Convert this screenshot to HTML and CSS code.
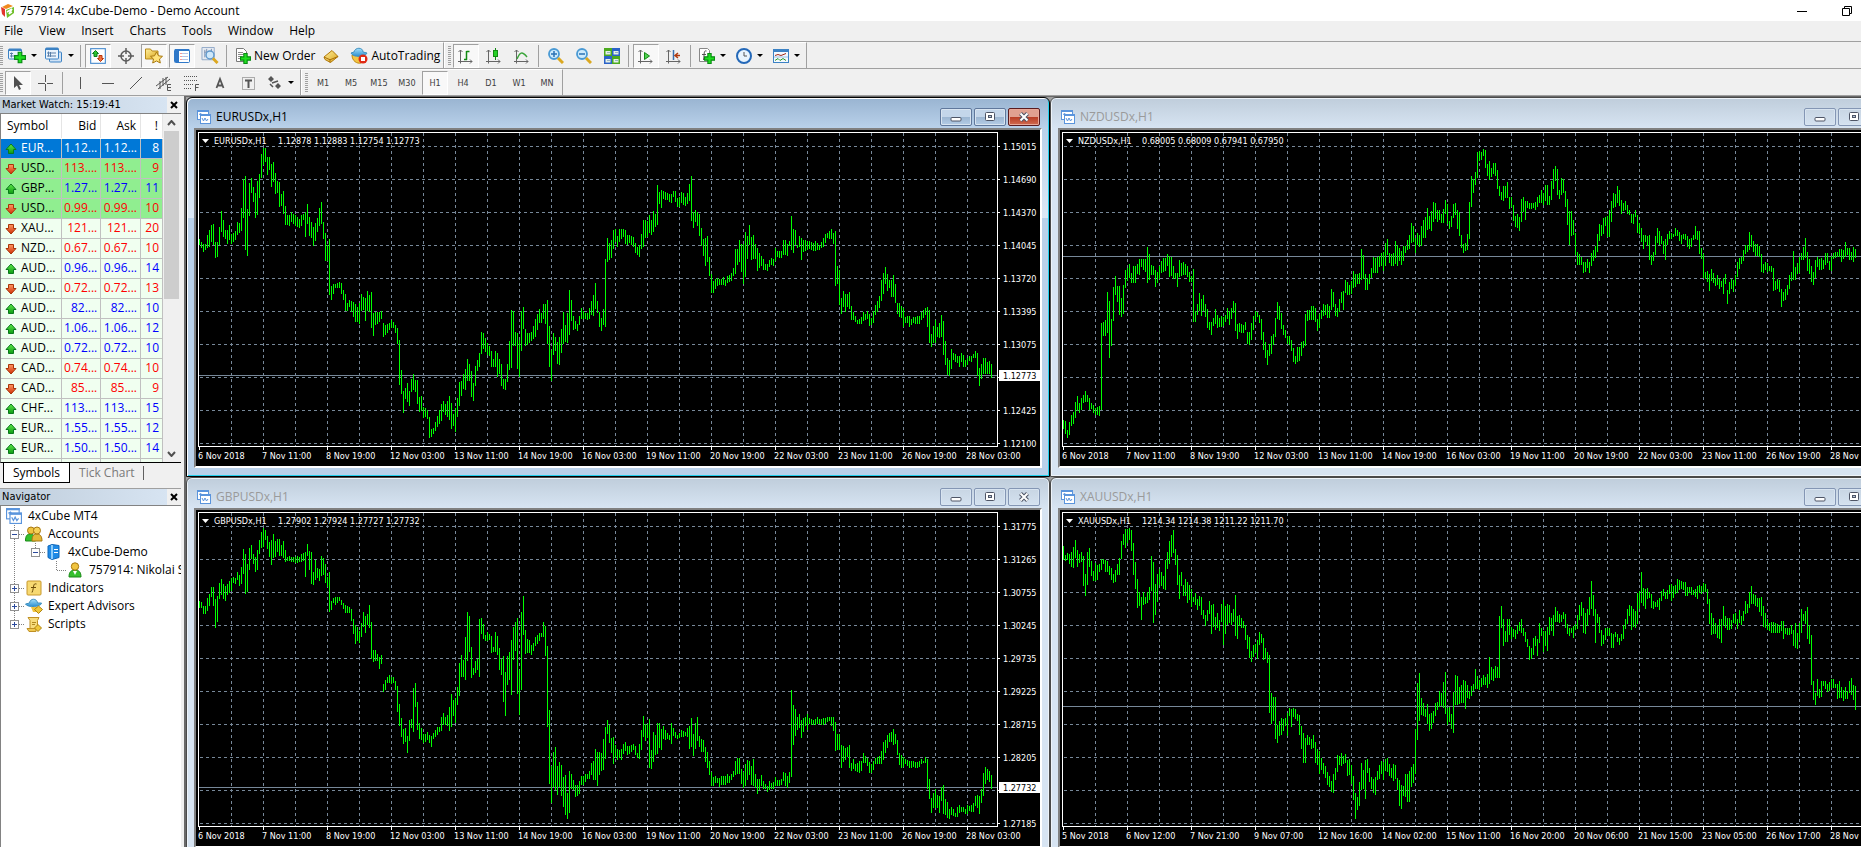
FILE: index.html
```html
<!DOCTYPE html>
<html lang="en">
<head>
  <meta charset="UTF-8">
  <title>757914: 4xCube-Demo - Demo Account</title>
  <link rel="stylesheet" href="styles.css">
</head>
<body>

  <!-- shared icons -->
  <svg class="sprite" width="0" height="0">
    <defs>
      <linearGradient id="gGreen" x1="0" y1="0" x2="0" y2="1"><stop offset="0" stop-color="#5fea4a"/><stop offset="1" stop-color="#0d9a12"/></linearGradient>
      <linearGradient id="gRed" x1="0" y1="0" x2="0" y2="1"><stop offset="0" stop-color="#ff9a62"/><stop offset="1" stop-color="#cf2d06"/></linearGradient>
      <linearGradient id="gGold" x1="0" y1="0" x2="1" y2="1"><stop offset="0" stop-color="#fff0a0"/><stop offset="1" stop-color="#dba416"/></linearGradient>
      <linearGradient id="gBlue" x1="0" y1="0" x2="0" y2="1"><stop offset="0" stop-color="#a5e0fb"/><stop offset="1" stop-color="#2b8fd0"/></linearGradient>
    </defs>

    <symbol id="up" viewBox="0 0 12 12"><path d="M6 1 L11 6.500 H8.500 V10.500 H3.500 V6.500 H1Z" fill="url(#gGreen)" stroke="#0a7a1c"/></symbol>
    <symbol id="down" viewBox="0 0 12 12"><path d="M6 11 L11 5.500 H8.500 V1.500 H3.500 V5.500 H1Z" fill="url(#gRed)" stroke="#a83408"/></symbol>
    <symbol id="plus" viewBox="0 0 10 10"><path d="M3.500 .5h3v3h3v3h-3v3h-3v-3h-3v-3h3z" fill="#1fe01f" stroke="#0a8a14"/></symbol>

    <symbol id="logo" viewBox="0 0 16 16">
      <path d="M2 4 L8 1 L13 3 L6 6Z" fill="#f08a1d"/><path d="M1 4 L5 6 V14 L2 11Z" fill="#e2362b"/>
      <path d="M6 7 L14 4 V10 L7 15Z" fill="#6fbf2a"/><path d="M7 9 L12 6 L9 11 L12 9" fill="none" stroke="#fff" stroke-width="1.500"/>
    </symbol>
    <symbol id="new-chart" viewBox="0 0 18 16">
      <rect x=".5" y="1.500" width="13" height="10" rx="1" fill="#e8f3fd" stroke="#3c82c4"/><path d="M1 2.500h12" stroke="#3c82c4" stroke-width="2"/>
      <path d="M3.500 5v5M2 8.500h8M2 6h3" stroke="#5a7fa8" fill="none"/><use href="#plus" x="6" y="4" width="12" height="12"/>
    </symbol>
    <symbol id="profiles" viewBox="0 0 18 16">
      <rect x="4.500" y="4.500" width="12" height="10" rx="1" fill="#cfe2f5" stroke="#3c82c4"/>
      <rect x=".5" y=".5" width="13" height="11" rx="1" fill="#eaf4fd" stroke="#3c82c4"/><path d="M1 1.500h12" stroke="#3c82c4" stroke-width="2"/>
      <path d="M3.500 4v5M2 5.500h9M2 8.500h9M5.500 4.500v5" stroke="#5a7fa8"/>
    </symbol>
    <symbol id="watch" viewBox="0 0 16 16">
      <rect x=".5" y=".5" width="15" height="15" rx="1" fill="#fff" stroke="#5a96d2" stroke-width="1.500"/>
      <path d="M5.500 2.500l3 3h-1.500v3h-3v-3h-1.500z" fill="#2fc42f" stroke="#0a7a1c"/><path d="M10.500 13.500l3-3h-1.500v-3h-3v3h-1.500z" fill="#f07040" stroke="#b83408"/>
    </symbol>
    <symbol id="target" viewBox="0 0 16 16"><circle cx="8" cy="8" r="5" fill="none" stroke="#5b5b5b" stroke-width="1.500"/><path d="M8 0v6M8 10v6M0 8h6M10 8h6" stroke="#5b5b5b" stroke-width="1.500"/></symbol>
    <symbol id="favs" viewBox="0 0 18 16">
      <path d="M.5 1.500h5l1.500 2h6v8h-12.500z" fill="url(#gGold)" stroke="#b78a1c"/>
      <path d="M11.500 4.500l2 3.800 4 .5-3 2.700.8 4-3.800-2-3.800 2 .8-4-3-2.700 4-.5z" fill="#ffe27a" stroke="#a87810"/>
    </symbol>
    <symbol id="navi" viewBox="0 0 16 16">
      <rect x=".5" y="1.500" width="15" height="13" rx="1" fill="#fff" stroke="#2f78c8"/><path d="M1 2h14" stroke="#2f78c8" stroke-width="2"/><path d="M3 2v12" stroke="#2f78c8" stroke-width="4"/>
      <path d="M6.500 5.500h1M6.500 8.500h1M6.500 11.500h1" stroke="#e03030"/><path d="M8 5.500h6M8 8.500h6M8 11.500h6" stroke="#b4c4e8"/>
    </symbol>
    <symbol id="finder" viewBox="0 0 18 18">
      <path d="M.5 .5h13v13h-13z" fill="#e6ebf2" stroke="#8fa8c8"/><path d="M3.500 3v8M5.500 2v6M10.500 2v4M3 5.500h8" stroke="#7a8fae"/>
      <circle cx="9" cy="8.500" r="4.200" fill="#cfe8fa" stroke="#5f98cc" stroke-width="1.500"/><path d="M12 12l5 5" stroke="#dca820" stroke-width="3"/>
    </symbol>
    <symbol id="order" viewBox="0 0 16 16">
      <path d="M1.500 .5h7l3 3v10h-10z" fill="#fff" stroke="#7a7a7a"/><path d="M3 4.500h5M3 6.500h6M3 8.500h4M3 10.500h3" stroke="#8a8a8a"/><use href="#plus" x="5" y="5" width="11" height="11"/>
    </symbol>
    <symbol id="book" viewBox="0 0 16 16"><path d="M1 9L9 2.500 15 8.500 7.500 14.500 2 11.500Z" fill="url(#gGold)" stroke="#b07808"/><path d="M1 9l6 2.800L15 8.500M7 12v2.500" stroke="#a86c08" fill="none"/></symbol>
    <symbol id="auto" viewBox="0 0 18 17">
      <path d="M2 8c0 6 5 9 9 8 3-2 4-5 3-8z" fill="#f2c544" stroke="#c08a10"/><path d="M4 5C5 0 13 0 13 5l4 1c-1 4-14 5-16 0z" fill="url(#gBlue)" stroke="#3f90c0"/>
      <circle cx="13" cy="12" r="4.500" fill="#e02a14"/><rect x="11" y="10" width="4" height="4" fill="#fff"/>
    </symbol>
    <symbol id="axes" viewBox="0 0 16 16"><path d="M2.500 15.500V2M.5 4l2-2 2 2M0 13.500h14M12 11.500l2 2-2 2" stroke="#666" fill="none"/></symbol>
    <symbol id="bars" viewBox="0 0 16 16"><use href="#axes"/><path d="M8.500 3v9M8.500 3.500h3M6 11.500h3" stroke="#128a12" stroke-width="1.500"/></symbol>
    <symbol id="candles" viewBox="0 0 16 16"><use href="#axes"/><path d="M9.500 0v12" stroke="#128a12"/><rect x="7.500" y="2.500" width="4" height="6" fill="#24d024" stroke="#128a12"/></symbol>
    <symbol id="line" viewBox="0 0 16 16"><use href="#axes"/><path d="M3 11C6 4 8 3 13 9" stroke="#3aa53a" stroke-width="1.500" fill="none"/></symbol>
    <symbol id="zin" viewBox="0 0 16 16"><circle cx="6" cy="6" r="5" fill="#cdeafc" stroke="#4a9ad4" stroke-width="1.800"/><path d="M3 6h6M6 3v6" stroke="#2a72b4" stroke-width="1.500"/><path d="M10 10l5 5" stroke="#dba820" stroke-width="3"/></symbol>
    <symbol id="zout" viewBox="0 0 16 16"><circle cx="6" cy="6" r="5" fill="#cdeafc" stroke="#4a9ad4" stroke-width="1.800"/><path d="M3 6h6" stroke="#2a72b4" stroke-width="1.500"/><path d="M10 10l5 5" stroke="#dba820" stroke-width="3"/></symbol>
    <symbol id="tile" viewBox="0 0 16 16">
      <path d="M0 0h8v8H0z" fill="#4caa1e"/><path d="M8 0h8v8H8z" fill="#2a62c8"/><path d="M0 8h8v8H0z" fill="#2a62c8"/><path d="M8 8h8v8H8z" fill="#4caa1e"/>
      <path d="M1.500 3h5v3.500h-5zM9.500 3h5v3.500h-5zM1.500 11h5v3.500h-5zM9.500 11h5v3.500h-5z" fill="#e6f0e8"/><path d="M3 4.500h3M11 4.500h3M3 12.500h3M11 12.500h3" stroke="#98b4c4"/>
    </symbol>
    <symbol id="scroll" viewBox="0 0 16 16"><use href="#axes"/><path d="M6.500 4.500l5 3.500-5 3.500z" fill="#4fd04f" stroke="#128a12"/></symbol>
    <symbol id="shift" viewBox="0 0 16 16"><use href="#axes"/><path d="M7.500 2v10" stroke="#3a70b0" stroke-width="1.500"/><path d="M9 7.500h5M12 5L9 7.500l3 2.500" stroke="#b03a10" stroke-width="1.500" fill="none"/></symbol>
    <symbol id="indi" viewBox="0 0 16 16"><path d="M.5 .5h8l2 2v11h-10z" fill="#fff" stroke="#888"/><path d="M7.500 3c-3-1-2 3-3 9M3 6.500h4" stroke="#555" fill="none"/><use href="#plus" x="5" y="5" width="11" height="11"/></symbol>
    <symbol id="clock" viewBox="0 0 16 16"><circle cx="8" cy="8" r="7" fill="#e8f4fe" stroke="#2468b8" stroke-width="2"/><path d="M8 4v4h3" stroke="#555" fill="none"/></symbol>
    <symbol id="tmpl" viewBox="0 0 16 16"><rect x=".5" y="1.500" width="15" height="13" fill="#f4f9fe" stroke="#3c82c4"/><path d="M0 2.500h16" stroke="#3c82c4" stroke-width="3"/><path d="M2 7.500l3-1 3 1 5-2" stroke="#a02818" fill="none"/><path d="M1 9h14" stroke="#9cc0e4"/><path d="M2 12.500l3-2 2 2 3-2 3 2" stroke="#2a9a2a" fill="none"/></symbol>

    <symbol id="cursor" viewBox="0 0 16 16"><path d="M4 1v12l3-2.500 2 4.500 2-1-2-4h4z" fill="#505050"/></symbol>
    <symbol id="cross" viewBox="0 0 16 16"><path d="M7.500 0v7M7.500 9v7M0 8.500h7M9 8.500h6" stroke="#555"/></symbol>
    <symbol id="vline" viewBox="0 0 16 16"><path d="M8.500 2v12" stroke="#555"/></symbol>
    <symbol id="hline" viewBox="0 0 16 16"><path d="M2 8.500h12" stroke="#555"/></symbol>
    <symbol id="trend" viewBox="0 0 16 16"><path d="M2 14L14 2" stroke="#555"/></symbol>
    <symbol id="chan" viewBox="0 0 16 16"><path d="M0 11L12 2M2 14L14 4M4 6v8M7 3v8M10 2v8" stroke="#555" fill="none"/><path d="M15 9.500h-3.500v6H15M11.500 12.500H15" stroke="#555" fill="none"/></symbol>
    <symbol id="fibo" viewBox="0 0 16 16"><path d="M0 1.500h14M0 5.500h14M0 9.500h10M0 13.500h8" stroke="#555" stroke-dasharray="1 1"/><path d="M11.500 16V9.500H15M11.500 12.500H14.500" stroke="#555" fill="none"/></symbol>
    <symbol id="txt" viewBox="0 0 16 16"><path d="M4.500 13L8 4l3.500 9M6 10.500h4" stroke="#555" stroke-width="1.800" fill="none"/></symbol>
    <symbol id="label" viewBox="0 0 16 16"><rect x="2.500" y="2.500" width="12" height="12" fill="none" stroke="#666" stroke-dasharray="1 1"/><path d="M5 5.500h7M8.500 5v8" stroke="#555" stroke-width="2"/></symbol>
    <symbol id="arrows" viewBox="0 0 16 16"><path d="M1 4l3-3 3 3-3 3zM8 11l3-3 3 3-3 3z" fill="#555"/><path d="M3 9l3 3M5 8l6-2" stroke="#555" stroke-width="1.500"/></symbol>

    <symbol id="mdi" viewBox="0 0 14 14">
      <rect x=".5" y=".5" width="11" height="9" fill="#fff" stroke="#5a94dc"/><path d="M0 1h12" stroke="#5a94dc" stroke-width="2"/><path d="M2 4.500l2-1 1 2" stroke="#5a94dc" fill="none"/>
      <rect x="3.500" y="4.500" width="10" height="9" fill="#fff" stroke="#5a94dc"/><path d="M3 5h11" stroke="#5a94dc" stroke-width="2"/><path d="M5 8l1.500 3 1.500-3 1.500 3 1.500-2" stroke="#5a94dc" fill="none"/>
    </symbol>
    <symbol id="users" viewBox="0 0 18 16">
      <path d="M.5 15c0-6 2-7 5-7s5 2 5 7z" fill="#35c02e" stroke="#1b8a18"/><circle cx="6" cy="4.500" r="3.500" fill="#f0c440" stroke="#a87810"/>
      <path d="M7 15c0-6 2-7 5-7s5 2 5 7z" fill="#e4b838" stroke="#a87810"/><circle cx="12" cy="4.500" r="3.500" fill="#f6d25a" stroke="#a87810"/>
    </symbol>
    <symbol id="user" viewBox="0 0 16 16"><path d="M2 15c0-5 2-7 6-7s6 2 6 7z" fill="#35c02e" stroke="#1b8a18"/><path d="M6 9l2 4 2-4z" fill="#fff"/><circle cx="8" cy="4.500" r="3.700" fill="#f0c440" stroke="#a87810"/></symbol>
    <symbol id="server" viewBox="0 0 16 16"><path d="M2 2l4-1.500 7 1v12l-7 2-4-2z" fill="#1f8ae6" stroke="#0f66b8"/><path d="M6 1v14" stroke="#8cccfa" stroke-width="2"/><path d="M8 5.500h4M8 8.500h4" stroke="#fff"/></symbol>
    <symbol id="func" viewBox="0 0 16 16"><rect x="1" y="1" width="14" height="14" rx="1" fill="#f7d972" stroke="#c8982a"/><path d="M10.500 4c-4-1-2 3-4.500 8.500M5 7.500h5" stroke="#6b4a08" fill="none"/></symbol>
    <symbol id="hat" viewBox="0 0 18 16"><path d="M6 9h7v5H8z" fill="#f0c440"/><path d="M4.500 5C5 0 12 0 12.500 5l4 0c0 4-14 5-16 1z" fill="url(#gBlue)" stroke="#3f90c0"/><path d="M13.500 8l4 3.500-4 4-4-4z" fill="#f0c83c" stroke="#b08410"/></symbol>
    <symbol id="script" viewBox="0 0 16 16"><path d="M2 1.500h11l-1.500 3v8H4v-8z" fill="#f7dc7c" stroke="#c09024"/><path d="M1 12.500h9v3H3z" fill="#f0c850" stroke="#c09024"/><path d="M6 6.500h4M6 8.500h3" stroke="#b08820"/><path d="M12 8.500l3.500 3.500-3.500 3.500-3.500-3.500z" fill="#f0c83c" stroke="#b08410"/></symbol>

    <symbol id="t-line" viewBox="0 0 21 18"><path d="M10.500 0v18" stroke="#808080" stroke-dasharray="1 1"/></symbol>
    <symbol id="t-elbow" viewBox="0 0 21 18"><path d="M10.500 0v9.500H21" stroke="#808080" fill="none" stroke-dasharray="1 1"/></symbol>
    <symbol id="t-minus" viewBox="0 0 21 18"><path d="M10.500 0v18M15 9.500h6" stroke="#808080" stroke-dasharray="1 1"/><rect x="6.500" y="5.500" width="8" height="8" fill="#fff" stroke="#919191"/><path d="M8 9.500h5" stroke="#2b4a9c"/></symbol>
    <symbol id="t-minus-end" viewBox="0 0 21 18"><path d="M10.500 0v9M15 9.500h6" stroke="#808080" stroke-dasharray="1 1"/><rect x="6.500" y="5.500" width="8" height="8" fill="#fff" stroke="#919191"/><path d="M8 9.500h5" stroke="#2b4a9c"/></symbol>
    <symbol id="t-plus" viewBox="0 0 21 18"><path d="M10.500 0v18M15 9.500h6" stroke="#808080" stroke-dasharray="1 1"/><rect x="6.500" y="5.500" width="8" height="8" fill="#fff" stroke="#919191"/><path d="M8 9.500h5M10.500 7v5" stroke="#2b4a9c"/></symbol>
    <symbol id="t-plus-end" viewBox="0 0 21 18"><path d="M10.500 0v9M15 9.500h6" stroke="#808080" stroke-dasharray="1 1"/><rect x="6.500" y="5.500" width="8" height="8" fill="#fff" stroke="#919191"/><path d="M8 9.500h5M10.500 7v5" stroke="#2b4a9c"/></symbol>

    <symbol id="p-close" viewBox="0 0 8 8"><path d="M1 1l6 6M7 1l-6 6" stroke="#000" stroke-width="2"/></symbol>
    <symbol id="w-min" viewBox="0 0 12 10"><rect x="1" y="5.500" width="10" height="3.500" rx="1" fill="#fff" stroke="#4e5566"/></symbol>
    <symbol id="w-max" viewBox="0 0 12 10"><rect x="1.500" y=".5" width="9" height="8" rx="1" fill="#fff" stroke="#4e5566"/><rect x="4.500" y="3.500" width="3" height="2" fill="#b8c8dc" stroke="#4e5566"/></symbol>
    <symbol id="w-close" viewBox="0 0 12 10"><path d="M2.500 1.500l7 7M9.500 1.500l-7 7" stroke="#4e5566" stroke-width="4"/><path d="M2.500 1.500l7 7M9.500 1.500l-7 7" stroke="#fff" stroke-width="2"/></symbol>
  </svg>

  <header class="titlebar">
    <svg class="app-icon"><use href="#logo"/></svg>
    <span class="app-title">757914: 4xCube-Demo - Demo Account</span>
    <button class="sys" aria-label="Minimize"><svg width="10" height="10"><path d="M0 5.500h10" stroke="#000"/></svg></button>
    <button class="sys" aria-label="Restore"><svg width="10" height="10"><path d="M.5 2.500h7v7h-7zM2.500 2.500v-2h7v7h-2" fill="none" stroke="#000"/></svg></button>
  </header>

  <nav class="menu">
    <button>File</button><button>View</button><button>Insert</button><button>Charts</button><button>Tools</button><button>Window</button><button>Help</button>
  </nav>

  <div class="toolbar">
    <div class="group">
      <i class="grip"></i>
      <button class="drop" aria-label="New chart"><svg class="wide"><use href="#new-chart"/></svg></button>
      <button class="drop" aria-label="Profiles"><svg class="wide"><use href="#profiles"/></svg></button>
      <i class="sep"></i>
      <button class="on" aria-label="Market Watch"><svg><use href="#watch"/></svg></button>
      <button aria-label="Data Window"><svg><use href="#target"/></svg></button>
      <button class="on" aria-label="Navigator"><svg class="wide"><use href="#favs"/></svg></button>
      <button class="on" aria-label="Terminal"><svg><use href="#navi"/></svg></button>
      <button aria-label="Strategy Tester"><svg class="wide"><use href="#finder"/></svg></button>
      <i class="sep"></i>
      <button class="text"><svg><use href="#order"/></svg>New Order</button>
      <button aria-label="MetaEditor"><svg><use href="#book"/></svg></button>
      <button class="text"><svg class="wide"><use href="#auto"/></svg>AutoTrading</button>
    </div>
    <div class="group">
      <i class="grip"></i>
      <button class="on" aria-label="Bar chart"><svg><use href="#bars"/></svg></button>
      <button aria-label="Candlesticks"><svg><use href="#candles"/></svg></button>
      <button aria-label="Line chart"><svg><use href="#line"/></svg></button>
      <i class="sep"></i>
      <button aria-label="Zoom in"><svg><use href="#zin"/></svg></button>
      <button aria-label="Zoom out"><svg><use href="#zout"/></svg></button>
      <button aria-label="Tile windows"><svg><use href="#tile"/></svg></button>
      <i class="sep"></i>
      <button class="on" aria-label="Auto scroll"><svg><use href="#scroll"/></svg></button>
      <button aria-label="Chart shift"><svg><use href="#shift"/></svg></button>
      <i class="sep"></i>
      <button class="drop" aria-label="Indicators"><svg><use href="#indi"/></svg></button>
      <button class="drop" aria-label="Periods"><svg><use href="#clock"/></svg></button>
      <button class="drop" aria-label="Templates"><svg><use href="#tmpl"/></svg></button>
    </div>
  </div>

  <div class="toolbar">
    <div class="group">
      <i class="grip"></i>
      <button class="on" aria-label="Cursor"><svg><use href="#cursor"/></svg></button>
      <button aria-label="Crosshair"><svg><use href="#cross"/></svg></button>
      <i class="sep"></i>
      <button aria-label="Vertical line"><svg><use href="#vline"/></svg></button>
      <button aria-label="Horizontal line"><svg><use href="#hline"/></svg></button>
      <button aria-label="Trendline"><svg><use href="#trend"/></svg></button>
      <button aria-label="Equidistant channel"><svg><use href="#chan"/></svg></button>
      <button aria-label="Fibonacci retracement"><svg><use href="#fibo"/></svg></button>
      <button aria-label="Text"><svg><use href="#txt"/></svg></button>
      <button aria-label="Text label"><svg><use href="#label"/></svg></button>
      <button class="drop" aria-label="Arrows"><svg><use href="#arrows"/></svg></button>
    </div>
    <div class="group periods">
      <i class="grip"></i>
      <button>M1</button><button>M5</button><button>M15</button><button>M30</button><button class="on">H1</button><button>H4</button><button>D1</button><button>W1</button><button>MN</button>
    </div>
  </div>

  <div class="work">
    <aside class="side">
      <section class="panel">
        <div class="panel-head"><h2>Market Watch: 15:19:41</h2><button aria-label="Close"><svg width="8" height="8"><use href="#p-close"/></svg></button></div>
        <div class="watch">
          <table>
            <thead><tr><th>Symbol</th><th>Bid</th><th>Ask</th><th>!</th></tr></thead>
            <tbody>
              <tr class="sel"><td><svg><use href="#up"/></svg>EUR...</td><td>1.12...</td><td>1.12...</td><td>8</td></tr>
              <tr class="hot dn"><td><svg><use href="#down"/></svg>USD...</td><td>113....</td><td>113....</td><td>9</td></tr>
              <tr class="hot"><td><svg><use href="#up"/></svg>GBP...</td><td>1.27...</td><td>1.27...</td><td>11</td></tr>
              <tr class="hot dn"><td><svg><use href="#down"/></svg>USD...</td><td>0.99...</td><td>0.99...</td><td>10</td></tr>
              <tr class="dn"><td><svg><use href="#down"/></svg>XAU...</td><td>121...</td><td>121...</td><td>20</td></tr>
              <tr class="dn"><td><svg><use href="#down"/></svg>NZD...</td><td>0.67...</td><td>0.67...</td><td>10</td></tr>
              <tr><td><svg><use href="#up"/></svg>AUD...</td><td>0.96...</td><td>0.96...</td><td>14</td></tr>
              <tr class="dn"><td><svg><use href="#down"/></svg>AUD...</td><td>0.72...</td><td>0.72...</td><td>13</td></tr>
              <tr><td><svg><use href="#up"/></svg>AUD...</td><td>82....</td><td>82....</td><td>10</td></tr>
              <tr><td><svg><use href="#up"/></svg>AUD...</td><td>1.06...</td><td>1.06...</td><td>12</td></tr>
              <tr><td><svg><use href="#up"/></svg>AUD...</td><td>0.72...</td><td>0.72...</td><td>10</td></tr>
              <tr class="dn"><td><svg><use href="#down"/></svg>CAD...</td><td>0.74...</td><td>0.74...</td><td>10</td></tr>
              <tr class="dn"><td><svg><use href="#down"/></svg>CAD...</td><td>85....</td><td>85....</td><td>9</td></tr>
              <tr><td><svg><use href="#up"/></svg>CHF...</td><td>113....</td><td>113....</td><td>15</td></tr>
              <tr><td><svg><use href="#up"/></svg>EUR...</td><td>1.55...</td><td>1.55...</td><td>12</td></tr>
              <tr><td><svg><use href="#up"/></svg>EUR...</td><td>1.50...</td><td>1.50...</td><td>14</td></tr>
              <tr><td></td><td></td><td></td><td></td></tr>
            </tbody>
          </table>
          <div class="scroll">
            <svg width="9" height="6"><path d="M1 5l3.500-4L8 5" fill="none" stroke="#505050" stroke-width="2"/></svg>
            <div class="thumb"></div>
            <svg width="9" height="6"><path d="M1 1l3.500 4L8 1" fill="none" stroke="#505050" stroke-width="2"/></svg>
          </div>
        </div>
        <div class="tabs"><button class="cur">Symbols</button><button>Tick Chart</button></div>
      </section>

      <section class="panel nav">
        <div class="panel-head"><h2>Navigator</h2><button aria-label="Close"><svg width="8" height="8"><use href="#p-close"/></svg></button></div>
        <ul class="tree">
          <li class="root"><svg class="ico"><use href="#mdi"/></svg>4xCube MT4</li>
          <li><svg class="cell"><use href="#t-minus"/></svg><svg class="ico big"><use href="#users"/></svg>Accounts</li>
          <li><svg class="cell"><use href="#t-line"/></svg><svg class="cell"><use href="#t-minus-end"/></svg><svg class="ico"><use href="#server"/></svg>4xCube-Demo</li>
          <li><svg class="cell"><use href="#t-line"/></svg><svg class="cell"></svg><svg class="cell"><use href="#t-elbow"/></svg><svg class="ico"><use href="#user"/></svg>757914: Nikolai St</li>
          <li><svg class="cell"><use href="#t-plus"/></svg><svg class="ico big"><use href="#func"/></svg>Indicators</li>
          <li><svg class="cell"><use href="#t-plus"/></svg><svg class="ico big"><use href="#hat"/></svg>Expert Advisors</li>
          <li><svg class="cell"><use href="#t-plus-end"/></svg><svg class="ico big"><use href="#script"/></svg>Scripts</li>
        </ul>
      </section>
    </aside>

    <main class="desktop">
      <section class="win active">
        <div class="win-head"><svg class="ico"><use href="#mdi"/></svg><h3>EURUSDx,H1</h3>
          <button aria-label="Minimize"><svg><use href="#w-min"/></svg></button><button aria-label="Maximize"><svg><use href="#w-max"/></svg></button><button class="close" aria-label="Close"><svg><use href="#w-close"/></svg></button></div>
        <svg class="chart" id="eurusd"></svg>
      </section>
      <section class="win">
        <div class="win-head"><svg class="ico"><use href="#mdi"/></svg><h3>NZDUSDx,H1</h3>
          <button aria-label="Minimize"><svg><use href="#w-min"/></svg></button><button aria-label="Maximize"><svg><use href="#w-max"/></svg></button><button class="close" aria-label="Close"><svg><use href="#w-close"/></svg></button></div>
        <svg class="chart" id="nzdusd"></svg>
      </section>
      <section class="win">
        <div class="win-head"><svg class="ico"><use href="#mdi"/></svg><h3>GBPUSDx,H1</h3>
          <button aria-label="Minimize"><svg><use href="#w-min"/></svg></button><button aria-label="Maximize"><svg><use href="#w-max"/></svg></button><button class="close" aria-label="Close"><svg><use href="#w-close"/></svg></button></div>
        <svg class="chart" id="gbpusd"></svg>
      </section>
      <section class="win">
        <div class="win-head"><svg class="ico"><use href="#mdi"/></svg><h3>XAUUSDx,H1</h3>
          <button aria-label="Minimize"><svg><use href="#w-min"/></svg></button><button aria-label="Maximize"><svg><use href="#w-max"/></svg></button><button class="close" aria-label="Close"><svg><use href="#w-close"/></svg></button></div>
        <svg class="chart" id="xauusd"></svg>
      </section>
    </main>
  </div>

  <script src="charts.js"></script>
</body>
</html>
```
FILE: styles.css
```css
* {
  box-sizing: border-box;
}

body {
  margin: 0;
  height: 100vh;
  overflow: hidden;
  display: flex;
  flex-direction: column;
  background: #f0f0f0;
  color: #000;
  font: 12px/16px "Segoe UI", "Open Sans", "Noto Sans", sans-serif;
}

button {
  font: inherit;
  color: inherit;
  background: none;
  border: none;
  padding: 0;
  display: flex;
  align-items: center;
  justify-content: center;
}

svg {
  display: block;
  flex: none;
}

h2, h3 {
  margin: 0;
  font-size: 12px;
  font-weight: normal;
}

.sprite {
  position: absolute;
}

/* title bar and menu */
.titlebar {
  display: flex;
  align-items: center;
  height: 21px;
  margin-right: -8px;
  background: #fff;
}

.app-icon {
  width: 16px;
  height: 16px;
  margin-right: 4px;
}

.app-title {
  flex: 1;
}

.sys {
  width: 45px;
  height: 16px;
}

.menu {
  display: flex;
  height: 20px;
  padding-left: 4px;
  gap: 16px;
}

/* toolbars */
.toolbar {
  display: flex;
  height: 27px;
  border-top: 1px solid #a0a0a0;
}

.group {
  display: flex;
  align-items: center;
  gap: 2px;
  padding-right: 2px;
  border-top: 1px solid #fff;
  border-right: 1px solid #a0a0a0;
  box-shadow: 0 1px #a0a0a0;
}

.group + .group {
  padding-left: 3px;
  border-left: 1px solid #fff;
}

.grip {
  width: 3px;
  height: 20px;
  background: repeating-linear-gradient(#a0a0a0 0 1px, #f0f0f0 1px 2px);
}

.sep {
  width: 1px;
  height: 22px;
  margin: 0 2px 0 1px;
  background: #a0a0a0;
}

.group button {
  width: 26px;
  height: 24px;
  gap: 3px;
  border: 1px solid transparent;
}

.group button svg {
  width: 16px;
  height: 16px;
}

.group button svg.wide {
  width: 18px;
  height: 17px;
}

.group .on {
  background: #f8f8f8;
  border-color: #a0a0a0 #fff #fff #a0a0a0;
}

.group .drop {
  width: 35px;
  gap: 5px;
}

.drop::after {
  content: "";
  border: 3px solid transparent;
  border-top-color: #000;
  border-bottom: none;
}

.group .text {
  width: auto;
  padding: 0 0 0 3px;
}

.periods button {
  font: 9px/12px Tahoma, "DejaVu Sans Condensed", sans-serif;
  color: #404040;
}

/* left side */
.work {
  flex: 1;
  min-height: 0;
  display: flex;
  border-top: 1px solid #a0a0a0;
}

.side {
  width: 184px;
  flex: none;
  display: flex;
  flex-direction: column;
  padding: 1px 3px 0 0;
}

.panel-head {
  display: flex;
  align-items: center;
  height: 16px;
  font-family: Tahoma, "DejaVu Sans Condensed", sans-serif;
}

.panel-head h2 {
  flex: 1;
  padding-left: 2px;
  font-size: 11px;
  background: linear-gradient(90deg, #bfcddb, #d7e4f2);
}

.panel-head button {
  width: 14px;
}

.watch {
  display: flex;
  height: 350px;
  overflow: hidden;
  border: 1px solid #828282;
  border-width: 1px 0 0 1px;
  border-bottom: 1px solid #000;
}

table {
  table-layout: fixed;
  width: 162px;
  height: 364px;
  border-collapse: collapse;
  background: #f0fff0;
}

th, td {
  height: 20px;
  padding: 0 3px 0 0;
  text-align: right;
  font-weight: normal;
  white-space: nowrap;
  color: #0000ff;
  border: 1px solid #c0c0c0;
  border-width: 0 1px 1px 0;
}

th {
  height: 24px;
  padding-right: 4px;
  color: #000;
  background: #fff;
  border-color: #fff #e5e5e5;
}

th:first-child {
  width: 60px;
  padding-left: 6px;
  text-align: left;
}

th:last-child {
  width: 22px;
}

td:first-child {
  color: #000;
  text-align: left;
}

td svg {
  float: left;
  width: 12px;
  height: 12px;
  margin: 3px 4px 0 4px;
}

.dn td {
  color: #ff0000;
}

.hot {
  background: #90ee90;
}

.sel {
  background: #0078d7;
}

.sel td, .sel td:first-child {
  color: #fff;
}

.dn td:first-child {
  color: #000;
}

.scroll {
  flex: 1;
  display: flex;
  flex-direction: column;
  align-items: center;
  padding: 6px 2px 5px 0;
}

.thumb {
  width: 15px;
  height: 168px;
  margin: 5px 0 auto;
  background: #cdcdcd;
}

.tabs {
  display: flex;
  height: 25px;
  padding-left: 3px;
  color: #7a7a7a;
}

.tabs button {
  height: 20px;
  padding: 0 9px;
}

.tabs .cur {
  background: #fff;
  color: #000;
  border: 1px solid #000;
  border-top: none;
}

.tabs button:last-child::after {
  content: "";
  height: 14px;
  margin-left: 8px;
  border-left: 1px solid #606060;
}

.nav {
  flex: 1;
  display: flex;
  flex-direction: column;
  border-top: 1px solid #a0a0a0;
}

.tree {
  flex: 1;
  margin: 0;
  padding: 1px 0 0 3px;
  overflow: hidden;
  list-style: none;
  background: #fff;
  border: 1px solid #828282;
  border-width: 1px 0 0 1px;
}

.tree li {
  display: flex;
  align-items: center;
  height: 18px;
  white-space: nowrap;
}

.tree .cell {
  width: 21px;
  height: 18px;
}

.ico {
  width: 16px;
  height: 16px;
  margin-right: 6px;
}

.tree .big {
  width: 18px;
  margin-right: 5px;
}

.tree .root {
  padding-left: 2px;
}

/* chart windows */
.desktop {
  flex: 1;
  min-width: 0;
  overflow: hidden;
  display: grid;
  grid-template-columns: repeat(2, 864px);
  grid-auto-rows: 380px;
  background: #a0a0a0;
  border: 1px solid #696969;
  border-width: 1px 0 0 2px;
}

.win {
  padding: 0 6px 7px;
  border: 1px solid #4a4a4a;
  border-radius: 6px 6px 0 0;
  box-shadow: inset 0 0 0 1px #eef4fa;
  background: linear-gradient(#bfcddb, #d7e4f2 30px) no-repeat #d7e4f2;
}

.win.active {
  border-color: #000;
  box-shadow: inset 1px 1px #fff, inset -1px -1px #22d0ee;
  background: linear-gradient(#99b4d1, #b9d1ea 30px, #dce8f5 120px, #b9d1ea 120px);
}

.win-head {
  display: flex;
  align-items: center;
  gap: 2px;
  height: 30px;
  padding: 7px 3px 0 4px;
  color: #9a9a9a;
}

.active .win-head {
  color: #000;
}

.win-head .ico {
  width: 14px;
  height: 14px;
  margin-right: 3px;
}

.win-head h3 {
  flex: 1;
}

.win-head button {
  width: 32px;
  height: 18px;
  border: 1px solid #8496b4;
  border-radius: 2px;
  box-shadow: inset 0 0 0 1px #d8e4f0;
}

.win-head button svg {
  width: 12px;
  height: 10px;
}

.active .win-head button {
  border-color: #60789c;
  background: linear-gradient(#c4d6ea 50%, #9cb6d2 50%, #b4cce6);
}

.active .win-head .close {
  border-color: #5a1c20;
  box-shadow: inset 0 0 0 1px #e8a898;
  background: linear-gradient(#e0a090 50%, #b83c24 50%, #d06c50);
}

.chart {
  width: 848px;
  height: 340px;
  margin: 0 1px;
  background: #000;
  border: 2px solid;
  border-color: #808080 #fff #fff #808080;
  font: 9px Tahoma, "DejaVu Sans Condensed", sans-serif;
}
```
FILE: charts.js
```js
const DATES = ["6 Nov 2018", "7 Nov 11:00", "8 Nov 19:00", "12 Nov 03:00", "13 Nov 11:00", "14 Nov 19:00", "16 Nov 03:00", "19 Nov 11:00", "20 Nov 19:00", "22 Nov 03:00", "23 Nov 11:00", "26 Nov 19:00", "28 Nov 03:00"];
const GOLD_DATES = ["5 Nov 2018", "6 Nov 12:00", "7 Nov 21:00", "9 Nov 07:00", "12 Nov 16:00", "14 Nov 02:00", "15 Nov 11:00", "16 Nov 20:00", "20 Nov 06:00", "21 Nov 15:00", "23 Nov 05:00", "26 Nov 17:00", "28 Nov 03:00"];

// bars: "index high low", three points to a pixel, measured down from `top`.
// Bars that are left out are interpolated.
const charts = {
  eurusd: {
    name: "EURUSDx,H1", values: "1.12878 1.12883 1.12754 1.12773", dates: DATES, top: 105, line: 245, price: "1.12773",
    prices: ["1.15015", "1.14690", "1.14370", "1.14045", "1.13720", "1.13395", "1.13075", "", "1.12425", "1.12100"],
    bars: `0 432 450,2 448 470,3 448 466,4 420 458,5 405 455,6 390 442,7 388 450,8 442 490,9 442 486,10 396 450,11 348 410,12 374 425,13 404 433,14 404 446,15 390 434,16 418 448,18 408 434,19 380 420,20 384 414,21 340 408,22 253 370,23 243 465,24 342 482,25 264 362,26 250 293,27 276 322,28 294 368,29 258 360,30 237 308,31 177 250,32 160 210,33 159 202,34 186 240,35 186 225,36 208 275,37 202 262,38 234 296,39 258 293,40 260 335,41 297 333,42 288 356,43 333 390,44 360 390,45 360 392,46 352 380,48 360 392,50 372 400,51 360 392,52 356 375,53 352 426,54 326 386,55 366 423,56 380 430,57 396 452,58 384 438,59 368 410,60 338 392,61 321 386,62 380 432,63 414 498,64 450 498,65 432 600,66 573 614,67 567 596,68 567 580,70 560 578,71 564 597,72 584 614,73 597 648,74 624 648,75 614 636,77 620 666,78 627 682,79 636 682,80 624 688,81 597 648,82 606 644,83 608 678,84 588 648,85 600 650,86 591 698,87 654 722,88 651 690,90 652 682,91 648 672,92 684 726,93 690 720,95 684 705,96 675 698,97 680 700,98 690 714,99 699 747,100 735 870,101 825 897,102 888 954,103 880 912,104 864 920,105 888 933,106 852 892,107 837 885,108 855 890,109 855 927,110 906 951,111 903 948,112 936 969,113 940 965,114 945 972,115 966 1029,116 1003 1026,117 998 1018,119 962 996,121 927 978,122 918 952,123 927 960,124 918 966,125 903 975,126 924 1003,127 957 993,128 938 1012,129 908 966,130 861 933,131 857 903,132 837 882,133 822 885,134 792 858,135 807 858,136 828 906,137 864 918,138 813 873,139 795 828,140 774 816,141 711 777,142 714 762,144 744 780,145 753 782,146 768 816,147 792 816,148 768 816,149 774 846,150 792 836,151 807 873,152 852 882,153 852 885,154 807 861,155 738 825,156 645 819,157 648 752,158 711 754,159 714 822,160 735 845,161 648 768,162 636 702,163 702 754,164 714 750,166 711 738,168 672 726,170 642 684,171 654 684,172 627 672,173 627 686,174 615 747,175 693 816,176 765 857,177 714 780,178 726 768,179 742 807,180 726 810,181 702 774,182 651 748,183 690 742,184 654 744,185 585 720,186 615 678,187 663 704,188 678 702,189 687 708,191 639 672,193 654 672,194 655 674,195 639 672,196 618 660,197 600 663,198 564 642,199 618 654,200 651 696,201 669 708,202 642 690,203 492 696,204 429 501,205 444 495,206 435 488,207 405 462,208 402 442,209 423 455,210 402 440,212 402 425,213 405 446,214 420 450,215 420 444,217 426 456,218 444 474,219 456 480,220 450 486,221 417 462,222 375 456,223 375 428,224 378 426,225 360 414,226 375 420,227 348 410,228 357 396,229 270 390,230 291 327,231 285 340,232 288 312,234 294 315,236 297 324,237 288 306,238 288 320,239 308 336,240 306 336,241 291 324,242 294 330,243 306 334,244 294 327,245 267 318,246 243 378,247 351 399,248 345 381,249 351 393,250 357 423,251 399 453,252 432 483,253 429 513,254 423 501,255 486 543,256 537 594,257 558 594,258 552 582,259 549 572,261 552 570,262 546 570,263 555 573,264 543 564,266 534 558,267 519 543,268 462 537,269 462 510,270 435 501,271 447 531,272 447 566,273 411 546,274 423 492,275 390 450,276 426 495,277 420 492,278 447 492,279 459 528,280 474 519,281 483 513,282 492 525,283 507 525,284 507 528,285 495 516,286 489 510,287 492 513,288 459 498,289 468 486,291 468 489,292 435 480,293 435 480,294 447 483,295 438 453,296 363 465,297 402 474,298 405 450,299 450 459,300 423 456,301 429 495,302 435 471,303 436 468,305 438 462,307 445 467,308 438 468,310 450 464,312 429 455,313 417 444,314 414 430,316 402 432,317 414 447,318 408 573,319 513 567,320 525 630,321 609 657,322 588 636,323 597 651,324 597 636,325 591 642,326 633 675,327 651 675,328 663 681,329 675 687,331 666 687,332 651 678,333 657 675,334 648 672,335 657 693,336 669 690,337 648 684,338 630 660,340 603 640,341 555 618,342 534 597,343 516 567,344 537 588,345 555 579,346 555 606,347 540 606,348 567 624,349 624 657,350 624 666,351 633 669,352 639 696,353 666 684,354 663 684,355 663 696,356 672 690,357 666 684,359 663 687,360 663 687,361 651 675,363 639 660,364 636 696,365 645 744,366 717 756,367 693 744,368 675 744,369 696 726,370 684 729,371 660 726,372 678 780,373 738 810,374 789 840,375 795 843,376 762 822,377 774 795,378 777 801,379 783 804,380 783 816,381 774 801,382 780 816,383 795 816,384 789 810,385 783 798,386 783 801,387 777 789,388 768 789,389 774 843,390 819 873,391 807 852,392 789 837,393 789 837,394 801 837,395 798 837,396 807 849`
  },
  nzdusd: {
    name: "NZDUSDx,H1", values: "0.68005 0.68009 0.67941 0.67950", dates: DATES, top: 105, line: 126,
    bars: `0 975 1002,1 978 1017,2 1006 1029,3 981 1020,4 960 993,5 951 987,6 921 970,7 903 948,8 924 954,9 909 945,10 900 924,11 888 921,12 900 921,13 909 945,14 924 942,15 930 954,16 939 960,17 936 960,18 933 963,19 684 945,20 681 723,21 675 723,22 591 714,23 618 789,24 672 753,25 576 678,26 543 600,27 573 621,28 573 660,29 609 666,30 570 657,31 525 579,32 519 558,33 507 549,34 534 564,35 513 564,36 513 564,37 507 537,38 492 540,39 492 516,41 492 531,42 456 564,43 477 555,44 510 540,45 513 540,46 525 576,47 531 564,48 513 552,49 498 534,50 489 531,51 489 528,52 477 513,53 483 546,54 486 543,55 513 552,56 534 552,57 534 576,58 495 546,59 504 543,60 501 540,61 507 540,62 513 546,63 531 561,64 543 561,65 522 681,66 648 681,67 627 660,68 594 648,69 612 663,70 600 648,71 627 666,72 642 699,73 681 705,74 681 720,75 669 693,76 642 687,77 660 699,78 669 696,79 663 696,80 666 693,81 660 681,82 639 672,83 648 690,84 639 672,85 618 654,86 624 708,87 687 732,88 684 711,89 687 714,90 690 714,91 681 705,92 711 747,93 711 750,94 684 735,95 663 705,96 648 675,97 650 666,98 660 684,99 672 735,100 711 765,101 741 789,102 765 810,103 747 783,104 723 777,105 717 750,106 669 726,107 621 672,108 633 675,109 654 702,110 690 720,111 705 729,112 723 747,113 723 750,114 735 768,115 759 801,116 783 807,117 756 801,118 756 798,119 741 783,120 738 759,121 657 753,122 645 678,123 645 675,124 633 675,125 633 675,126 639 681,127 672 708,128 657 699,129 645 672,130 627 663,131 630 660,132 627 669,133 633 669,134 582 645,135 591 636,136 627 663,137 639 666,138 612 651,139 591 624,140 588 645,141 555 594,142 561 600,143 570 600,144 558 597,145 528 579,146 537 576,147 537 567,148 534 567,149 462 555,150 480 552,151 537 585,152 549 585,153 537 567,154 519 549,155 486 534,156 489 534,157 486 534,158 483 516,159 474 513,160 471 528,161 444 513,162 432 480,163 474 504,164 477 513,165 474 513,166 438 507,167 450 513,168 459 498,169 468 510,170 453 498,171 453 474,172 435 465,173 420 462,174 384 444,175 393 441,176 429 474,177 414 450,178 420 456,179 393 453,180 375 429,181 366 429,182 339 405,183 363 402,184 348 408,185 321 381,186 324 372,187 345 381,188 345 375,189 357 384,190 342 384,191 315 357,192 327 387,193 378 402,194 363 396,195 327 369,196 324 360,197 345 402,198 351 423,199 420 459,200 447 474,201 444 468,202 417 465,203 321 432,204 243 336,205 252 294,206 231 270,207 171 249,208 168 198,209 171 195,210 162 183,211 165 219,212 207 243,213 198 255,214 219 246,215 204 237,216 204 243,217 225 282,218 273 303,219 291 315,220 273 318,221 273 309,222 261 309,223 306 342,224 306 336,225 330 378,226 363 396,227 357 399,228 366 408,229 312 381,230 306 351,231 318 375,232 318 339,233 324 342,235 324 339,236 321 345,237 306 336,238 300 324,239 285 324,240 294 330,241 270 318,242 270 330,243 303 330,244 258 315,245 222 282,246 213 258,247 222 300,248 285 312,249 249 300,250 252 294,251 288 336,252 312 390,253 348 450,254 348 423,255 375 420,256 414 480,257 471 510,258 477 510,259 486 510,260 501 534,261 501 531,262 492 519,263 501 534,264 474 513,265 465 498,266 453 489,267 417 471,268 387 438,269 390 423,270 369 417,271 366 393,272 363 426,273 345 426,274 318 381,275 294 339,276 297 336,277 273 324,278 285 333,279 315 357,280 324 348,281 318 345,282 330 357,283 345 360,284 357 384,285 357 387,286 345 366,287 360 414,288 384 417,289 399 441,290 420 462,291 420 441,292 423 453,293 420 495,294 480 510,295 471 498,296 423 480,297 399 444,298 408 450,299 423 447,300 438 477,301 432 495,302 417 450,303 408 432,304 414 432,305 417 426,306 399 423,307 405 423,308 411 438,309 420 447,310 417 432,311 417 435,312 423 456,313 432 462,314 429 456,315 420 435,316 393 432,317 408 435,318 408 477,319 459 492,320 477 549,321 531 552,322 528 561,323 537 588,324 522 558,325 534 564,326 549 573,327 540 570,328 552 582,329 558 576,330 549 597,331 537 567,332 585 627,333 561 597,334 552 582,335 555 591,336 540 573,337 501 546,338 489 522,339 486 507,340 465 498,341 450 477,342 450 471,343 411 465,344 420 456,345 438 471,346 447 483,347 447 483,348 453 486,349 477 531,350 507 534,351 501 525,352 504 531,353 513 528,354 513 531,355 519 588,356 558 585,357 552 582,358 555 591,359 582 636,360 591 618,361 582 615,362 570 600,363 540 582,364 531 558,365 468 555,366 516 555,367 504 537,368 486 534,369 474 495,370 456 495,371 429 489,372 471 528,373 492 537,374 513 561,375 531 570,376 495 549,377 486 516,378 492 525,379 489 525,380 495 522,381 474 510,382 474 504,383 498 525,384 483 528,385 474 492,386 471 489,387 471 486,388 462 486,389 462 501,390 465 492,391 441 486,392 459 480,393 459 495,394 471 495,395 456 501,396 462 489`
  },
  gbpusd: {
    name: "GBPUSDx,H1", values: "1.27902 1.27924 1.27727 1.27732", dates: DATES, top: 120, line: 277, price: "1.27732",
    prices: ["1.31775", "1.31265", "1.30755", "1.30245", "1.29735", "1.29225", "1.28715", "1.28205", "", "1.27185"],
    bars: `0 393 414,1 396 414,2 408 432,3 408 432,4 384 423,5 372 408,6 351 380,7 351 408,8 387 473,9 378 456,10 338 387,11 327 375,12 342 387,13 348 393,14 342 375,15 333 370,16 324 364,17 321 338,18 324 342,19 306 330,20 315 348,21 291 342,22 237 312,23 252 372,24 282 366,25 234 300,26 225 267,27 252 282,28 261 306,29 240 300,30 210 252,31 186 234,32 174 231,33 180 210,34 198 237,35 216 261,36 210 285,37 192 264,38 213 261,39 207 246,40 207 258,41 225 258,42 213 264,43 240 276,44 261 273,45 258 273,47 261 276,49 259 279,50 261 276,51 252 276,52 249 273,53 246 321,54 222 258,55 243 300,56 246 342,57 306 345,58 270 330,59 294 324,60 297 333,61 258 318,62 264 315,63 282 338,64 321 350,65 306 426,66 393 420,67 384 400,68 381 405,70 381 393,72 399 417,73 405 429,75 411 429,76 417 453,77 447 492,78 465 521,79 471 512,80 483 519,81 459 500,82 426 471,83 438 489,84 432 465,85 405 474,86 456 567,87 540 576,88 540 574,89 552 573,90 561 597,91 555 582,92 642 665,93 630 660,94 621 639,95 615 640,96 621 642,97 621 639,98 633 660,99 648 726,100 702 768,101 744 801,102 777 822,103 774 816,104 798 849,105 750 813,106 747 774,107 654 786,108 639 711,109 696 780,110 759 807,111 774 810,112 792 819,113 792 816,114 786 810,115 795 819,116 798 831,117 789 807,119 771 795,120 771 786,121 741 783,122 729 765,123 741 765,124 735 768,125 711 783,126 672 771,127 690 738,128 684 759,129 651 705,130 579 678,131 555 621,132 570 621,133 501 630,134 426 573,135 438 546,136 531 624,137 594 615,138 573 609,139 567 600,140 447 621,141 444 492,142 462 507,143 495 513,144 486 513,145 492 510,146 498 549,147 531 546,148 486 546,149 498 555,150 534 600,151 567 615,152 558 696,153 606 738,154 558 645,155 546 630,156 510 675,157 471 570,158 456 543,159 444 672,160 600 735,161 426 660,162 378 495,163 480 552,164 507 549,165 510 549,166 525 555,167 519 543,168 501 528,170 489 513,171 489 501,172 456 501,173 468 558,174 528 771,175 720 942,176 888 999,177 846 951,178 831 960,179 888 975,180 876 951,181 885 978,182 921 1011,183 915 1035,184 969 1047,185 903 1029,186 912 957,187 930 960,188 945 981,189 945 978,190 933 972,191 918 945,192 918 945,193 912 936,194 912 927,195 903 927,196 879 915,197 873 930,198 837 930,199 846 948,200 846 916,201 849 903,202 807 900,203 771 867,204 750 792,205 765 819,206 804 849,207 801 882,208 825 864,209 837 870,210 840 864,211 837 870,212 822 852,213 816 843,214 828 855,216 825 846,217 822 840,218 828 855,219 849 864,220 822 867,221 780 840,222 738 801,223 762 813,224 762 804,225 747 894,226 840 897,227 786 876,228 795 855,229 759 852,230 759 834,231 777 840,232 768 807,233 780 810,234 789 807,235 795 810,236 759 822,237 774 798,238 786 804,239 795 807,241 780 801,243 786 798,244 774 801,245 768 837,246 744 831,247 792 858,248 759 837,249 741 813,250 798 831,251 807 846,252 810 846,253 831 876,254 846 894,255 873 915,256 906 948,257 921 948,258 918 939,259 924 939,260 924 951,261 918 945,263 918 945,264 912 939,265 918 939,267 903 921,268 873 915,269 864 912,270 864 912,271 897 942,272 906 954,273 882 948,274 870 930,275 873 915,276 888 945,277 867 948,278 912 954,279 927 972,280 927 960,281 915 948,282 933 957,283 942 957,284 948 966,285 933 960,286 939 957,287 936 957,288 921 948,289 930 948,291 927 945,292 906 933,293 909 948,294 918 954,295 906 939,296 660 921,297 705 825,298 717 798,299 741 780,300 732 774,301 750 804,302 744 786,303 741 768,304 732 780,305 744 762,307 750 765,309 741 762,310 747 762,312 744 765,314 741 756,315 741 753,317 741 783,318 756 843,319 792 840,320 792 840,321 825 894,322 828 876,323 834 870,324 831 861,325 825 894,326 879 903,327 867 897,328 882 903,329 879 906,330 873 909,331 873 903,332 849 879,333 858 879,334 864 888,335 876 909,336 882 909,337 873 900,338 864 882,339 861 882,340 858 882,341 843 882,342 816 870,343 810 849,344 795 834,345 789 816,346 786 816,347 777 825,348 792 822,349 810 855,350 849 885,351 855 894,352 861 891,353 867 882,355 873 894,357 873 891,359 876 894,360 873 891,361 867 882,362 873 879,363 861 879,364 867 957,365 927 987,366 984 1029,367 969 1014,368 957 1014,369 975 1014,370 978 1029,371 951 993,372 945 1032,373 987 1035,374 996 1044,375 1017 1047,376 1011 1035,377 1017 1038,378 1029 1041,379 1011 1041,380 1005 1029,381 1011 1026,382 1011 1026,383 1017 1032,384 1005 1032,385 1008 1023,387 999 1026,388 978 1008,389 975 1014,390 978 1032,391 957 999,392 909 978,393 891 942,394 897 930,395 903 936,396 915 957`
  },
  xauusd: {
    name: "XAUUSDx,H1", values: "1214.34 1214.38 1211.22 1211.70", dates: GOLD_DATES, top: 120, line: 196,
    bars: `0 228 270,1 255 273,2 249 270,3 252 282,4 246 291,5 231 294,6 210 264,7 240 291,8 252 279,9 246 276,10 258 348,11 312 378,12 246 345,13 234 291,14 273 318,15 303 333,16 279 333,17 285 330,18 282 306,19 267 300,20 267 282,21 270 306,22 273 306,23 288 315,24 294 330,25 312 339,26 300 336,27 282 315,28 264 315,29 213 267,30 192 225,31 177 234,32 177 219,33 174 210,34 180 243,35 219 315,36 276 357,37 327 414,38 366 408,39 381 450,40 366 405,41 381 402,42 366 399,43 351 390,44 258 363,45 276 459,46 342 435,47 312 396,48 297 345,49 306 348,50 318 357,51 270 360,52 246 297,53 213 282,54 195 261,55 180 249,56 237 285,57 255 345,58 315 387,59 306 348,60 345 378,61 327 378,62 336 399,63 345 390,64 357 411,65 381 396,66 369 405,67 387 420,68 378 408,69 381 435,70 420 447,71 435 468,72 420 453,73 393 432,74 405 492,75 402 471,76 441 480,77 429 474,78 450 483,79 402 456,80 390 525,81 408 492,82 402 465,83 405 459,84 429 465,85 417 456,86 375 498,87 438 507,88 435 468,89 444 474,90 453 474,91 465 510,92 495 537,93 501 564,94 543 576,95 525 561,96 522 549,97 510 567,98 486 525,99 492 519,100 504 570,101 534 567,102 546 579,103 555 729,104 669 762,105 681 753,106 681 807,107 765 819,108 753 798,109 744 795,110 747 783,111 744 768,112 729 798,113 714 738,114 717 771,115 714 741,116 717 747,117 732 753,118 735 795,119 768 837,120 789 879,121 804 879,122 795 825,123 801 825,124 807 837,125 795 834,126 816 879,127 837 885,128 843 912,129 864 900,130 879 912,131 888 924,132 906 945,133 918 951,134 933 966,135 912 969,136 894 930,137 855 906,138 858 885,139 849 888,140 858 882,141 852 879,142 870 918,143 867 915,144 885 942,145 918 990,146 969 1047,147 981 1020,148 936 1008,149 879 960,150 900 957,151 870 987,152 867 909,153 894 936,154 921 957,155 927 969,156 921 975,157 903 930,158 885 927,159 873 912,160 876 930,161 867 903,162 864 906,163 882 918,164 894 924,165 882 933,166 885 927,167 924 960,168 930 1008,169 945 1017,170 948 978,171 912 981,172 912 996,173 903 996,174 891 951,175 882 939,176 777 912,177 639 810,178 609 753,179 684 735,180 699 738,181 717 741,182 702 762,183 732 783,184 729 777,185 723 759,186 699 738,187 696 720,188 663 711,189 669 708,190 636 714,191 606 732,192 714 765,193 711 756,194 732 777,195 666 789,196 615 705,197 618 705,198 651 702,199 645 699,200 630 699,201 633 717,202 645 684,203 663 687,204 648 678,205 642 663,206 597 657,207 618 657,208 630 660,209 624 651,210 615 645,211 621 645,212 612 654,213 561 642,214 591 630,215 597 633,216 588 624,217 591 624,218 438 624,219 408 474,220 447 528,221 483 516,222 447 516,223 447 495,224 471 507,225 477 501,226 480 507,227 465 492,228 456 483,229 447 489,230 474 498,231 486 516,232 507 531,233 528 570,234 534 567,235 504 555,236 498 528,237 507 558,238 459 519,239 474 498,240 483 546,241 483 528,242 471 543,243 441 495,244 444 483,245 435 498,246 411 456,247 423 456,248 432 459,249 435 456,250 426 447,251 432 474,252 462 492,253 474 498,254 474 489,255 468 504,256 462 480,257 435 477,258 405 450,259 396 438,260 414 489,261 429 492,262 417 468,263 381 435,264 333 417,265 375 438,266 417 519,267 432 459,268 441 489,269 480 528,270 495 522,271 474 510,272 474 498,273 474 498,274 489 534,275 492 534,276 486 501,277 492 516,278 504 525,279 492 513,280 465 507,281 447 477,282 417 462,283 405 438,284 408 480,285 417 471,286 423 474,287 369 462,288 363 417,289 306 399,290 354 408,291 357 417,292 354 387,293 366 384,294 372 414,295 393 417,296 396 411,297 390 411,298 384 420,299 363 393,300 357 378,301 366 387,302 360 387,303 345 372,304 342 393,305 348 384,306 345 372,307 327 369,308 330 360,309 333 357,310 336 360,311 336 378,312 351 378,313 351 369,314 351 375,315 360 375,316 357 381,317 348 387,318 345 369,319 348 372,320 339 366,321 342 366,322 357 402,323 387 462,324 429 495,325 444 492,326 459 492,327 465 504,328 447 507,329 447 519,330 408 468,331 438 474,332 444 480,333 444 480,334 450 477,335 432 459,336 429 462,337 447 477,338 420 459,339 438 465,340 423 453,341 393 432,342 402 429,343 366 414,344 348 402,345 372 402,346 375 408,347 384 411,348 384 426,349 381 438,350 408 471,351 429 474,352 447 480,353 459 483,354 456 489,355 456 489,356 459 489,358 465 489,359 453 483,360 453 507,361 474 492,363 474 495,364 465 492,365 480 528,366 459 534,367 489 537,368 459 510,369 417 489,370 432 453,371 423 462,372 411 507,373 465 522,374 495 645,375 633 690,376 669 705,377 627 678,378 657 684,379 633 681,380 633 648,381 633 657,382 642 666,383 636 663,384 627 654,385 627 654,386 642 654,387 642 687,388 633 684,389 651 684,390 660 693,391 651 687,392 663 687,393 633 669,394 624 675,395 645 690,396 648 720`
  }
};

function barPath(chart) {
  const points = chart.bars.split(",").map(p => p.split(" ").map(Number));
  const y = v => Math.round((v - chart.top) / 3);
  let d = "";
  points.forEach((p, n) => {
    const next = points[n + 1] || [p[0] + 1];
    for (let i = p[0]; i < next[0]; i++) {
      const t = (i - p[0]) / (next[0] - p[0]);
      const hi = t ? p[1] + (next[1] - p[1]) * t : p[1];
      const lo = t ? p[2] + (next[2] - p[2]) * t : p[2];
      d += `M${3.5 + i * 2} ${y(hi)}V${y(lo)}`;
    }
  });
  return d;
}

function text(x, y, value, fill) {
  return `<text x="${x}" y="${y}" fill="${fill || "#fff"}">${value}</text>`;
}

function draw(id) {
  const chart = charts[id];
  let grid = "";
  let ticks = "";
  let labels = "";

  for (let r = 0; r < 10; r++) {
    const y = 16.5 + r * 33;
    grid += `M4 ${y}H801`;
    ticks += `M801 ${y}h3`;
    if (chart.prices && chart.prices[r]) labels += text(807, y + 3.5, chart.prices[r]);
  }
  for (let c = 0; c < 24; c++) grid += `M${35.5 + c * 32} 3V316`;
  chart.dates.forEach((date, c) => {
    ticks += `M${3.5 + c * 64} 317v3`;
    labels += text(2 + c * 64, 329, date);
  });

  let tag = "";
  if (chart.price) {
    tag = `<rect x="803" y="${chart.line - 5}" width="41" height="11" fill="#fff"/>` + text(807, chart.line + 4, chart.price, "#000");
  }

  document.getElementById(id).innerHTML = `
    <g fill="none" shape-rendering="crispEdges">
      <path d="${grid}" stroke="#778899" stroke-dasharray="3 3"/>
      <path d="M3 ${chart.line + 0.5}H801" stroke="#778899"/>
      <path d="${barPath(chart)}" stroke="#00ff00"/>
      <path d="M2.500 316.500V2.500H801.500V316.500Z${ticks}" stroke="#fff"/>
    </g>
    <path d="M6 9h7l-3.500 4z" fill="#fff"/>
    ${text(18, 14, chart.name)}${text(82, 14, chart.values)}${labels}${tag}`;
}

Object.keys(charts).forEach(draw);
```
